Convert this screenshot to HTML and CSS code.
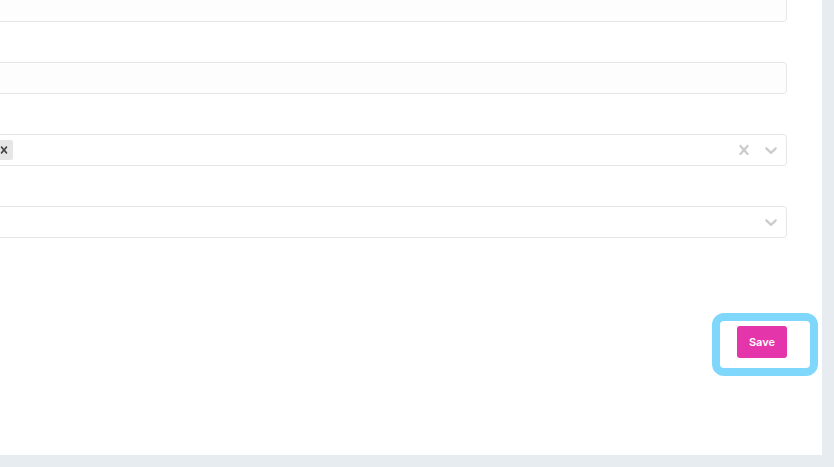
FILE: index.html
```html
<!DOCTYPE html>
<html lang="en">
<head>
<meta charset="utf-8">
<title>Settings</title>
<link rel="stylesheet" href="styles.css">
</head>
<body>
<div class="page">
  <div class="card">
    <form class="form">
      <div class="field">
        <label class="label">Name</label>
        <div class="input"></div>
      </div>
      <div class="field">
        <label class="label">Description</label>
        <div class="input"></div>
      </div>
      <div class="field">
        <label class="label">Tags</label>
        <div class="select">
          <div class="values">
            <span class="chip"><span class="chip-label">Documentation</span><span class="chip-remove"><svg width="14" height="14" viewBox="0 0 20 20"><path d="M14.348 14.849c-0.469 0.469-1.229 0.469-1.697 0l-2.651-3.030-2.651 3.029c-0.469 0.469-1.229 0.469-1.697 0-0.469-0.469-0.469-1.229 0-1.697l2.758-3.150-2.759-3.152c-0.469-0.469-0.469-1.228 0-1.697s1.228-0.469 1.697 0l2.652 3.031 2.651-3.031c0.469-0.469 1.228-0.469 1.697 0s0.469 1.229 0 1.697l-2.758 3.152 2.758 3.150c0.469 0.469 0.469 1.229 0 1.698z"/></svg></span></span>
          </div>
          <div class="indicators">
            <span class="indicator clear"><svg width="20" height="20" viewBox="0 0 20 20"><path d="M14.348 14.849c-0.469 0.469-1.229 0.469-1.697 0l-2.651-3.030-2.651 3.029c-0.469 0.469-1.229 0.469-1.697 0-0.469-0.469-0.469-1.229 0-1.697l2.758-3.150-2.759-3.152c-0.469-0.469-0.469-1.228 0-1.697s1.228-0.469 1.697 0l2.652 3.031 2.651-3.031c0.469-0.469 1.228-0.469 1.697 0s0.469 1.229 0 1.697l-2.758 3.152 2.758 3.150c0.469 0.469 0.469 1.229 0 1.698z"/></svg></span>
            <span class="indicator dropdown"><svg width="20" height="20" viewBox="0 0 20 20"><path d="M4.516 7.548c0.436-0.446 1.043-0.481 1.576 0l3.908 3.747 3.908-3.747c0.533-0.481 1.141-0.446 1.574 0 0.436 0.445 0.408 1.197 0 1.615-0.406 0.418-4.695 4.502-4.695 4.502-0.217 0.223-0.502 0.335-0.787 0.335s-0.57-0.112-0.789-0.335c0 0-4.287-4.084-4.695-4.502s-0.436-1.170 0-1.615z"/></svg></span>
          </div>
        </div>
      </div>
      <div class="field">
        <label class="label">Category</label>
        <div class="select">
          <div class="values"></div>
          <div class="indicators">
            <span class="indicator dropdown"><svg width="20" height="20" viewBox="0 0 20 20"><path d="M4.516 7.548c0.436-0.446 1.043-0.481 1.576 0l3.908 3.747 3.908-3.747c0.533-0.481 1.141-0.446 1.574 0 0.436 0.445 0.408 1.197 0 1.615-0.406 0.418-4.695 4.502-4.695 4.502-0.217 0.223-0.502 0.335-0.787 0.335s-0.57-0.112-0.789-0.335c0 0-4.287-4.084-4.695-4.502s-0.436-1.170 0-1.615z"/></svg></span>
          </div>
        </div>
      </div>
      <div class="actions">
        <div class="save-wrap">
          <button type="button" class="save">Save</button>
          <span class="highlight"></span>
        </div>
      </div>
    </form>
  </div>
</div>
</body>
</html>
```

FILE: styles.css
```css
* { box-sizing: border-box; }

html, body {
  margin: 0;
  padding: 0;
  height: 467px;
  overflow: hidden;
  background: #e7ecf0;
  font-family: "Inter", "Liberation Sans", sans-serif;
}

.page {
  padding: 0 12px 12px 0;
}

.card {
  margin-left: -220px;
  margin-top: -50px;
  background: #ffffff;
  padding: 0 35px 97px 30px;
}

.form {
  display: flex;
  flex-direction: column;
}

.field {
  display: flex;
  flex-direction: column;
}

.label {
  display: block;
  height: 20px;
  margin: 8px 0 12px;
  font-size: 13px;
  line-height: 20px;
  color: #333;
}

.input {
  height: 32px;
  border: 1px solid #e6e6e6;
  border-radius: 4px;
  background: #fdfdfd;
}

.select {
  height: 32px;
  border: 1px solid #e6e6e6;
  border-radius: 4px;
  background: #fff;
  display: flex;
  align-items: center;
}

.values {
  flex: 1;
  display: flex;
  align-items: center;
  padding: 0 8px;
}

.chip {
  display: flex;
  align-items: center;
  height: 20px;
  margin: 0 2px;
  background: #e6e6e6;
  border-radius: 2px;
  font-size: 11px;
  line-height: 20px;
  color: #333;
}

.chip-label {
  width: 172px;
  padding-left: 6px;
  overflow: hidden;
  white-space: nowrap;
}

.chip-remove {
  display: flex;
  align-items: center;
  padding: 0 2px 0 4px;
  fill: #444;
}

.chip-remove svg { display: block; }

.indicators {
  display: flex;
  align-items: center;
}

.indicator {
  display: flex;
  fill: #cccccc;
}

.indicator svg { display: block; }

.clear {
  padding: 4px 7px 4px 8px;
}

.dropdown {
  padding: 4px 5px 4px 0;
}

.actions {
  display: flex;
  justify-content: flex-end;
  margin-top: 88px;
}

.save-wrap {
  position: relative;
}

.save {
  display: block;
  width: 50px;
  height: 32px;
  border: 0;
  border-radius: 3px;
  background: #e535ab;
  color: #fff;
  font-family: "Inter", "Liberation Sans", sans-serif;
  font-size: 11px;
  font-weight: 600;
  padding: 0;
}

.highlight {
  position: absolute;
  left: -25px;
  right: -31px;
  top: -13px;
  bottom: -18px;
  border: 8px solid #7fd8fb;
  border-radius: 12px;
  pointer-events: none;
}
```
